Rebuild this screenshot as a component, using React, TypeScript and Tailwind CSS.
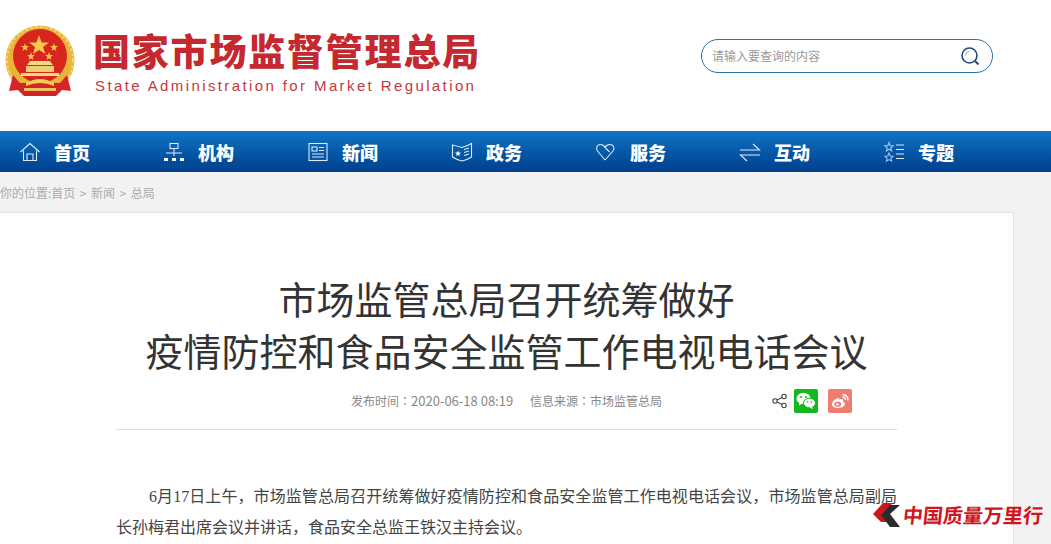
import type { ReactNode } from "react";

const FONT = "font-['Microsoft_YaHei','Noto_Sans_CJK_SC',sans-serif]";

function Emblem() {
  return (
    <svg width="72" height="74" viewBox="0 0 72 74" className="shrink-0">
      {/* wreath */}
      <circle cx="36" cy="35" r="34.5" fill="#e8b53a" />
      <circle cx="36" cy="35" r="33" fill="none" stroke="#f6d469" strokeWidth="2" strokeDasharray="3 2" />
      <circle cx="36" cy="31" r="27" fill="#d9251d" />
      {/* ribbon */}
      <path d="M9 50 L5 66 L14 65 L20 71 L52 71 L58 65 L67 66 L63 50 L56 58 L16 58 Z" fill="#d3242a" />
      {/* stars */}
      <path d="M35 10 L37.6 17.4 L45 17.6 L39 22 L41.4 29 L35 25 L29 29 L31 22 L25 17.6 L32.4 17.4 Z" fill="#f6c94c" />
      <path d="M21 18 L22 21 L25 21 L22.6 23 L23.5 26 L21 24.2 L18.5 26 L19.4 23 L17 21 L20 21 Z" fill="#f6c94c" />
      <path d="M50 18 L51 21 L54 21 L51.6 23 L52.5 26 L50 24.2 L47.5 26 L48.4 23 L46 21 L49 21 Z" fill="#f6c94c" />
      <path d="M27 27 L28 30 L31 30 L28.6 32 L29.5 35 L27 33.2 L24.5 35 L25.4 32 L23 30 L26 30 Z" fill="#f6c94c" />
      <path d="M45 27 L46 30 L49 30 L46.6 32 L47.5 35 L45 33.2 L42.5 35 L43.4 32 L41 30 L44 30 Z" fill="#f6c94c" />
      {/* gate */}
      <path d="M26 36 L46 36 L49 40 L23 40 Z" fill="#f3d98a" />
      <path d="M22 41 H50 V47 H22 Z" fill="#f0cf72" />
      <path d="M17 48 H55 V51 H17 Z" fill="#f3d98a" />
      {/* knot */}
      <path d="M22 58 Q36 50 50 58 L50 61 Q36 55 22 61 Z" fill="#f3c951" />
      <path d="M20 63 H52 V66 H20 Z" fill="#eec25a" />
    </svg>
  );
}

function IconBox({ children }: { children: ReactNode }) {
  return (
    <svg width="22" height="22" viewBox="0 0 22 22" fill="none" stroke="#dbeafe" strokeWidth="1.1" className="shrink-0">
      {children}
    </svg>
  );
}

const navItems: { label: string; icon: ReactNode }[] = [
  {
    label: "首页",
    icon: (
      <IconBox>
        <path d="M1.5 11 L11 2.5 L20.5 11" />
        <path d="M4.5 9.5 V19.5 H17.5 V9.5" />
        <path d="M8 19.5 V13 H14 V19.5" />
      </IconBox>
    ),
  },
  {
    label: "机构",
    icon: (
      <IconBox>
        <rect x="7" y="2.5" width="8" height="5" />
        <path d="M3 12 H19 M11 7.5 V15" />
        <path d="M1 17 H5 V20 H1 Z M9 17 H13 V20 H9 Z M17 17 H21 V20 H17 Z" fill="#ffffff" stroke="none" />
      </IconBox>
    ),
  },
  {
    label: "新闻",
    icon: (
      <IconBox>
        <rect x="2" y="2.5" width="18" height="17" />
        <rect x="5" y="6" width="5" height="4" />
        <path d="M12 6.5 H17 M12 9.5 H17 M5 13 H17 M5 16 H17" />
      </IconBox>
    ),
  },
  {
    label: "政务",
    icon: (
      <IconBox>
        <path d="M1.5 4 Q6 5 11 6.5 Q16 5 20.5 2.5 V16 Q16 19 11 20 Q6 19 1.5 16 Z" />
        <path d="M7 9.5 L7.8 11.5 L10 11.6 L8.3 13 L8.9 15 L7 13.9 L5.1 15 L5.7 13 L4 11.6 L6.2 11.5 Z" fill="#ffffff" stroke="none" />
        <path d="M13 8.5 L18 7 M13 11.5 L18 10 M13 14.5 L18 13" />
      </IconBox>
    ),
  },
  {
    label: "服务",
    icon: (
      <IconBox>
        <path d="M10 19 L2.5 10 C0.5 7 2 3.5 5.5 3.5 C7.5 3.5 9 4.5 10 6.5 L14.5 11 M10 6.5 C11 4.5 13 3.5 15 3.5 C18.5 3.5 20 7 18 10 L10 19" />
      </IconBox>
    ),
  },
  {
    label: "互动",
    icon: (
      <IconBox>
        <path d="M1 9 H20.5 L14 3" />
        <path d="M21 14 H1.5 L8 20" />
      </IconBox>
    ),
  },
  {
    label: "专题",
    icon: (
      <IconBox>
        <path d="M6 1.5 L7.2 4.6 L10.2 4.8 L7.9 6.8 L8.6 9.8 L6 8.2 L3.4 9.8 L4.1 6.8 L1.8 4.8 L4.8 4.6 Z" stroke="#9cc4ee" />
        <path d="M6 12 L7.2 15 L10.2 15.2 L7.9 17.2 L8.6 20.2 L6 18.6 L3.4 20.2 L4.1 17.2 L1.8 15.2 L4.8 15 Z" stroke="#9cc4ee" />
        <path d="M13 4 H21 M13 8.5 H21 M13 13 H21 M13 17.5 H21" />
      </IconBox>
    ),
  },
];

export default function App() {
  return (
    <div className={`relative h-[544px] w-[1051px] overflow-hidden bg-[#f2f2f2] ${FONT}`}>
      {/* Cabecalho */}
      <header className="flex h-[131px] items-start justify-between bg-white pl-[4px] pr-[58px]">
        <div className="flex pt-[25px]">
          <Emblem />
          <div className="ml-[17px] pt-[2px]">
            <h1 className="whitespace-nowrap text-[37px] font-black leading-[46px] tracking-[1.8px] text-[#c5282e]">
              国家市场监督管理总局
            </h1>
            <p className="mt-[3px] whitespace-nowrap pl-[2px] font-['Liberation_Sans',sans-serif] text-[15px] leading-[20px] tracking-[2.39px] text-[#c4383c]">
              State Administration for Market Regulation
            </p>
          </div>
        </div>
        <div className="mt-[39px] flex h-[34px] w-[292px] items-center justify-between rounded-full border border-[#2a72a8] bg-white pl-[10px] pr-[12px]">
          <span className="text-[12px] text-[#999999]">请输入要查询的内容</span>
          <svg width="20" height="20" viewBox="0 0 20 20" fill="none" stroke="#1d4a7c">
            <circle cx="9.5" cy="9.5" r="7.5" strokeWidth="1.6" />
            <path d="M5.5 9.5 A4 4 0 0 1 9.5 5.5" strokeWidth="1" stroke="#8fb0cc" />
            <path d="M15 15 L18.5 18.5" strokeWidth="2" />
          </svg>
        </div>
      </header>

      {/* Menu */}
      <nav className="flex h-[41px] bg-gradient-to-b from-[#1274c4] to-[#013f8d]">
        {navItems.map((item) => (
          <div key={item.label} className="flex w-[144px] items-center gap-[13px] pl-[19px]">
            {item.icon}
            <span className="text-[18px] font-black leading-none text-white">{item.label}</span>
          </div>
        ))}
      </nav>

      {/* Breadcrumb */}
      <div className="flex h-[40px] items-center gap-[4.5px] pt-[1px] text-[12px] text-[#aaaaaa]">
        <span>你的位置:首页</span>
        <span>&gt;</span>
        <span>新闻</span>
        <span>&gt;</span>
        <span>总局</span>
      </div>

      {/* Artigo */}
      <main className="h-[332px] w-[1014px] border-t border-r border-[#e3e3e3] bg-white px-[116px] pt-[59px]">
        <h2 className="-mx-[60px] text-center text-[38px] font-normal leading-[52px] text-[#333333]">
          市场监管总局召开统筹做好
          <br />
          疫情防控和食品安全监管工作电视电话会议
        </h2>

        <div className="mt-[13px] flex h-[24px] items-center pl-[235px] text-[12px] text-[#888888]">
          <span className="w-[179px] whitespace-nowrap">
            发布时间<span className="font-['Noto_Sans_CJK_TC']">：</span>
            <span className="text-[13px]">2020-06-18 08:19</span>
          </span>
          <span className="w-[242px] whitespace-nowrap">
            信息来源<span className="font-['Noto_Sans_CJK_TC']">：</span>市场监管总局
          </span>
          <svg width="16" height="16" viewBox="0 0 16 16" fill="none" stroke="#444444" strokeWidth="1.1" className="shrink-0">
            <circle cx="12" cy="3.5" r="2.2" />
            <circle cx="3" cy="8" r="2.2" />
            <circle cx="12" cy="12.5" r="2.2" />
            <path d="M5 7 L10 4.5 M5 9 L10 11.5" />
          </svg>
          <div className="ml-[6px] flex h-[24px] w-[24px] shrink-0 items-center justify-center rounded-[2px] bg-[#12b81e]">
            <svg width="20" height="18" viewBox="0 0 20 18" fill="#ffffff">
              <ellipse cx="7.5" cy="6.5" rx="7" ry="5.8" />
              <path d="M3.5 10 L3 13.5 L7 11 Z" />
              <ellipse cx="13.5" cy="11" rx="6" ry="4.8" stroke="#12b81e" strokeWidth="1" />
              <path d="M16 14.5 L17 17 L13.5 15.5 Z" />
              <circle cx="5" cy="5" r="1" fill="#12b81e" />
              <circle cx="10" cy="5" r="1" fill="#12b81e" />
              <circle cx="11.5" cy="10" r="0.8" fill="#12b81e" />
              <circle cx="15.5" cy="10" r="0.8" fill="#12b81e" />
            </svg>
          </div>
          <div className="ml-[10px] flex h-[24px] w-[24px] shrink-0 items-center justify-center rounded-[2px] bg-[#ee7c70]">
            <svg width="20" height="20" viewBox="0 0 20 20" fill="none">
              <path d="M8.5 7 C4.5 8 2 11 2 13.2 C2 15.8 5 17 8.2 17 C12 17 15 15 15 12.8 C15 11.2 13.5 11 13 10.7 C13.6 9.2 13 8 11.5 8 C10.5 8 9.5 8.4 9 8.6 C9.4 7.4 9.4 6.8 8.5 7 Z" fill="#ffffff" />
              <ellipse cx="7.8" cy="13.2" rx="3.4" ry="2.6" fill="#ee7c70" />
              <circle cx="7.4" cy="13.4" r="1.2" fill="#ffffff" />
              <path d="M12.5 3.5 A5.5 5.5 0 0 1 18 9.5 M12.5 6 A3 3 0 0 1 15.5 9" stroke="#ffffff" strokeWidth="1.5" />
            </svg>
          </div>
        </div>

        <div className="mt-[16px] h-px bg-[#dddddd]" />

        <p className="mt-[51px] text-justify indent-[33px] font-['Liberation_Serif','Noto_Sans_CJK_SC',serif] text-[16px] leading-[31px] text-[#444444]">
          6月17日上午，市场监管总局召开统筹做好疫情防控和食品安全监管工作电视电话会议，市场监管总局副局长孙梅君出席会议并讲话，食品安全总监王铁汉主持会议。
        </p>
      </main>

      {/* Marca d'agua */}
      <div className="absolute left-[873px] top-[500px] flex h-[30px] items-center">
        <svg width="28" height="26" viewBox="0 0 28 26" className="shrink-0">
          <path d="M10 1 H20 L9 12 L14 20 H8 L0 12 Z" fill="#c9171e" />
          <path d="M17 3 H27 L17 12 L27 25 H17 L8 13 Z" fill="#2b2b2b" />
        </svg>
        <span className="ml-[2px] -skew-x-6 whitespace-nowrap text-[20px] font-bold leading-none text-[#d01420]">
          中国质量万里行
        </span>
      </div>
    </div>
  );
}
